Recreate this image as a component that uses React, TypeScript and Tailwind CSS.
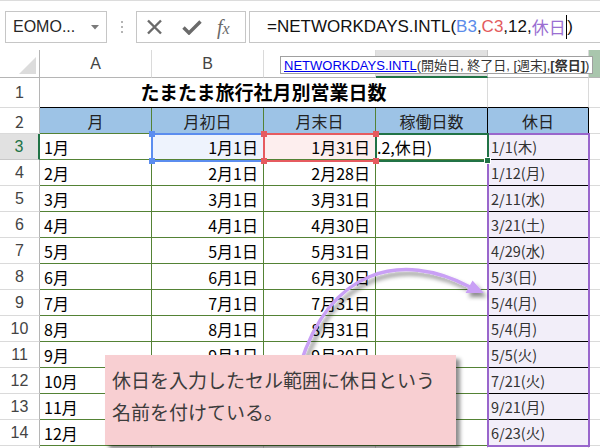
import React from "react";

const months = ["1月","2月","3月","4月","5月","6月","7月","8月","9月","10月","11月","12月"];
const lastDays = ["1月31日","2月28日","3月31日","4月30日","5月31日","6月30日","7月31日","8月31日","9月30日","10月31日","11月30日","12月31日"];
const holidays = ["1/1(木)","1/12(月)","2/11(水)","3/21(土)","4/29(水)","5/3(日)","5/4(月)","5/4(月)","5/5(火)","7/21(火)","9/21(月)","6/23(火)"];

function RowHead({ n }: { n: number }) {
  return (
    <div className="w-[40px] shrink-0 flex items-center justify-center border-r border-b border-r-[#b5b5b5] border-b-[#dadada] text-[16px] text-[#444]">
      {n}
    </div>
  );
}

export default function App() {
  return (
    <div className="relative w-[600px] h-[448px] overflow-hidden bg-white font-['Liberation_Sans','Noto_Sans_CJK_JP',sans-serif]">
      {/* Formula toolbar */}
      <div className="h-[50px] border-t border-[#dcdcdc] flex items-start pt-[10px]">
        <div className="ml-[5px] w-[102px] h-[32px] border border-[#c6c6c6] flex items-center justify-between pl-[7px] pr-[7px]">
          <span className="text-[16px] text-[#262626]">EOMO...</span>
          <svg width="8" height="5" viewBox="0 0 8 5">
            <polygon points="0,0 8,0 4,4.5" fill="#7a7a7a" />
          </svg>
        </div>
        <div className="ml-[14px] mt-[10px] flex flex-col gap-[3px]">
          <div className="w-[2px] h-[2px] bg-[#b4b4b4]" />
          <div className="w-[2px] h-[2px] bg-[#b4b4b4]" />
          <div className="w-[2px] h-[2px] bg-[#b4b4b4]" />
        </div>
        <div className="ml-[13px] w-[110px] h-[32px] border border-[#c6c6c6] flex items-center pl-[9px]">
          <svg width="17" height="16" viewBox="0 0 17 16">
            <path d="M2 1.5 L15 14.5 M15 1.5 L2 14.5" stroke="#6a6a6a" strokeWidth="2.4" fill="none" />
          </svg>
          <svg className="ml-[19px]" width="20" height="15" viewBox="0 0 20 15">
            <path d="M1.5 7.5 L7 13 L18.5 1.5" stroke="#6a6a6a" strokeWidth="3.4" fill="none" />
          </svg>
          <span className="ml-[15px] text-[20px] leading-none text-[#6a6a6a] italic font-['Liberation_Serif',serif]">
            f<span className="text-[16px]">x</span>
          </span>
        </div>
        <div className="ml-[3px] flex-1 h-[32px] border border-r-0 border-[#c6c6c6] flex items-center pl-[17px] text-[17px] text-[#111] whitespace-nowrap">
          <span>=NETWORKDAYS.INTL(</span>
          <span className="text-[#5b8cea]">B3</span>
          <span>,</span>
          <span className="text-[#e35b5d]">C3</span>
          <span>,12,</span>
          <span className="text-[#9b6fd2] font-['Noto_Sans_CJK_JP',sans-serif] text-[17px]">休日</span>
          <span className="w-[1.5px] h-[24px] bg-black" />
          <span>)</span>
        </div>
      </div>

      {/* Grid */}
      <div className="flex flex-col">
        {/* column headers */}
        <div className="flex h-[28px]">
          <div className="relative w-[40px] shrink-0 border-r border-b border-[#b5b5b5]">
            <svg className="absolute left-0 top-0" width="40" height="28" viewBox="0 0 40 28">
              <polygon points="36,7 36,24 19,24" fill="#dcdcdc" />
            </svg>
          </div>
          <div className="w-[112px] shrink-0 flex items-center justify-center border-r border-b border-r-[#dadada] border-b-[#b5b5b5] text-[16px] text-[#444]">A</div>
          <div className="w-[112px] shrink-0 flex items-center justify-center border-r border-b border-r-[#dadada] border-b-[#b5b5b5] text-[16px] text-[#444]">B</div>
          <div className="w-[112px] shrink-0 flex items-center justify-center border-r border-b border-r-[#dadada] border-b-[#b5b5b5] text-[16px] text-[#444]">C</div>
          <div className="w-[112px] shrink-0 flex items-center justify-center bg-[#e1e1e1] border-r border-r-[#c8c8c8] border-b-2 border-b-[#217346] text-[16px] text-[#217346]">D</div>
          <div className="w-[101px] shrink-0 flex items-center justify-center border-r border-b border-r-[#dadada] border-b-[#b5b5b5] text-[16px] text-[#444]">E</div>
          <div className="flex-1 bg-[#a9c6ad] border-b border-[#b5b5b5]" />
        </div>

        {/* row 1 */}
        <div className="flex h-[30px]">
          <RowHead n={1} />
          <div className="w-[448px] shrink-0 flex items-center justify-center border-r border-r-[#dadada] border-b border-b-black text-[19px] font-bold text-black font-['Noto_Sans_CJK_JP',sans-serif]">
            たまたま旅行社月別営業日数
          </div>
          <div className="w-[101px] shrink-0 border-r border-r-[#dadada] border-b border-b-black" />
          <div className="flex-1 border-b border-[#dadada]" />
        </div>

        {/* row 2 */}
        <div className="flex h-[26px] font-['Noto_Sans_CJK_JP',sans-serif] text-[16px] text-[#222]">
          <RowHead n={2} />
          <div className="w-[112px] shrink-0 flex items-center justify-center bg-[#9dc3e6] border-r border-b border-[#548235]">月</div>
          <div className="w-[112px] shrink-0 flex items-center justify-center bg-[#9dc3e6] border-r border-b border-[#548235]">月初日</div>
          <div className="w-[112px] shrink-0 flex items-center justify-center bg-[#9dc3e6] border-r border-b border-[#548235]">月末日</div>
          <div className="w-[112px] shrink-0 flex items-center justify-center bg-[#9dc3e6] border-r border-r-black border-b border-b-[#548235]">稼働日数</div>
          <div className="w-[101px] shrink-0 flex items-center justify-center bg-[#9dc3e6] border-r border-b border-black">休日</div>
          <div className="flex-1 border-b border-[#dadada]" />
        </div>

        {/* data rows */}
        {months.map((m, i) => (
          <div key={i} className="flex h-[26px] font-['Noto_Sans_CJK_JP',sans-serif] text-[16px] text-black">
            {i === 0 ? (
              <div className="w-[40px] shrink-0 flex items-center justify-center bg-[#e1e1e1] border-b border-b-[#c8c8c8] border-r-2 border-r-[#217346] text-[16px] text-[#217346] font-['Liberation_Sans',sans-serif]">
                3
              </div>
            ) : (
              <div className="w-[40px] shrink-0 flex items-center justify-center border-r border-b border-r-[#b5b5b5] border-b-[#dadada] text-[16px] text-[#444] font-['Liberation_Sans',sans-serif]">
                {i + 3}
              </div>
            )}
            <div className="w-[112px] shrink-0 flex items-center pl-[4px] border-r border-b border-[#548235]">{m}</div>
            <div className={`w-[112px] shrink-0 flex items-center justify-end pr-[5px] border-r border-b border-[#548235] ${i === 0 ? "bg-[#eef3fd]" : "bg-white"}`}>
              {i + 1}月1日
            </div>
            <div className={`w-[112px] shrink-0 flex items-center justify-end pr-[5px] border-r border-b border-[#548235] ${i === 0 ? "bg-[#fdeeee]" : "bg-white"}`}>
              {lastDays[i]}
            </div>
            <div className="w-[112px] shrink-0 flex items-center pl-[1px] border-r border-r-black border-b border-b-[#548235] overflow-hidden whitespace-nowrap">
              {i === 0 ? ".2,休日)" : ""}
            </div>
            <div className="w-[101px] shrink-0 flex items-center pl-[3px] bg-[#f2eef9] border-r border-r-[#dadada] border-b border-b-black text-[14.5px] text-[#333]">
              {holidays[i]}
            </div>
            <div className="flex-1 border-b border-[#dadada]" />
          </div>
        ))}

        {/* row 15 partial (label out of view) */}
        <div className="flex h-[26px]">
          <div className="w-[40px] shrink-0 border-r border-[#b5b5b5]" />
          <div className="w-[112px] shrink-0 border-r border-[#dadada]" />
          <div className="w-[112px] shrink-0 border-r border-[#dadada]" />
          <div className="w-[112px] shrink-0 border-r border-[#dadada]" />
          <div className="w-[112px] shrink-0 border-r border-[#dadada]" />
          <div className="w-[101px] shrink-0 border-r border-[#dadada]" />
          <div className="flex-1" />
        </div>
      </div>

      {/* Reference highlight boxes */}
      <div className="absolute left-[151px] top-[133px] w-[114px] h-[29px] border-2 border-[#5b8def]" />
      <div className="absolute left-[263px] top-[133px] w-[114px] h-[29px] border-2 border-[#e65b5f]" />
      <div className="absolute left-[487px] top-[133px] w-[103px] h-[314px] border-2 border-[#9966cc]" />
      <div className="absolute left-[375px] top-[133px] w-[114px] h-[29px] border-2 border-[#217346]" />

      {/* handles */}
      <div className="absolute left-[149px] top-[131px] w-[6px] h-[6px] bg-[#5b8def]" />
      <div className="absolute left-[149px] top-[158px] w-[6px] h-[6px] bg-[#5b8def]" />
      <div className="absolute left-[261px] top-[131px] w-[6px] h-[6px] bg-[#e65b5f]" />
      <div className="absolute left-[261px] top-[158px] w-[6px] h-[6px] bg-[#e65b5f]" />
      <div className="absolute left-[373px] top-[131px] w-[6px] h-[6px] bg-[#e65b5f]" />
      <div className="absolute left-[373px] top-[158px] w-[6px] h-[6px] bg-[#e65b5f]" />
      <div className="absolute left-[484px] top-[157px] w-[7px] h-[7px] bg-[#217346] border border-white" />

      {/* Arrow */}
      <svg className="absolute left-0 top-0 pointer-events-none" width="600" height="448" viewBox="0 0 600 448">
        <defs>
          <filter id="arrowShadow" x="-20%" y="-20%" width="140%" height="140%">
            <feDropShadow dx="3" dy="4" stdDeviation="2" floodColor="#000" floodOpacity="0.45" />
          </filter>
        </defs>
        <g filter="url(#arrowShadow)">
          <path d="M300 365 C330 270 400 250 470 287" fill="none" stroke="#c9a0f5" strokeWidth="3.5" />
          <polygon points="484,293 465.5,293 472.5,280.5" fill="#c9a0f5" />
        </g>
      </svg>

      {/* Callout */}
      <div className="absolute left-[105px] top-[355px] w-[351px] h-[90px] bg-[#f8cfd2] shadow-[4px_4px_4px_rgba(0,0,0,0.45)] pl-[7px] pt-[9px] text-[19px] leading-[32px] text-[#3c3c3c] font-['Noto_Sans_CJK_JP',sans-serif] whitespace-nowrap">
        <div>休日を入力したセル範囲に休日という</div>
        <div>名前を付けている。</div>
      </div>

      {/* Function tooltip */}
      <div className="absolute left-[280px] top-[56px] w-[313px] h-[18px] bg-white border border-[#a0a0a0] flex items-center pl-[3px] text-[13px] leading-none text-[#333] whitespace-nowrap">
        <span className="text-[#0000ee] underline">NETWORKDAYS.INTL</span>
        <span>(開始日, 終了日, [週末], </span>
        <span className="font-bold">[祭日]</span>
        <span>)</span>
      </div>
    </div>
  );
}
